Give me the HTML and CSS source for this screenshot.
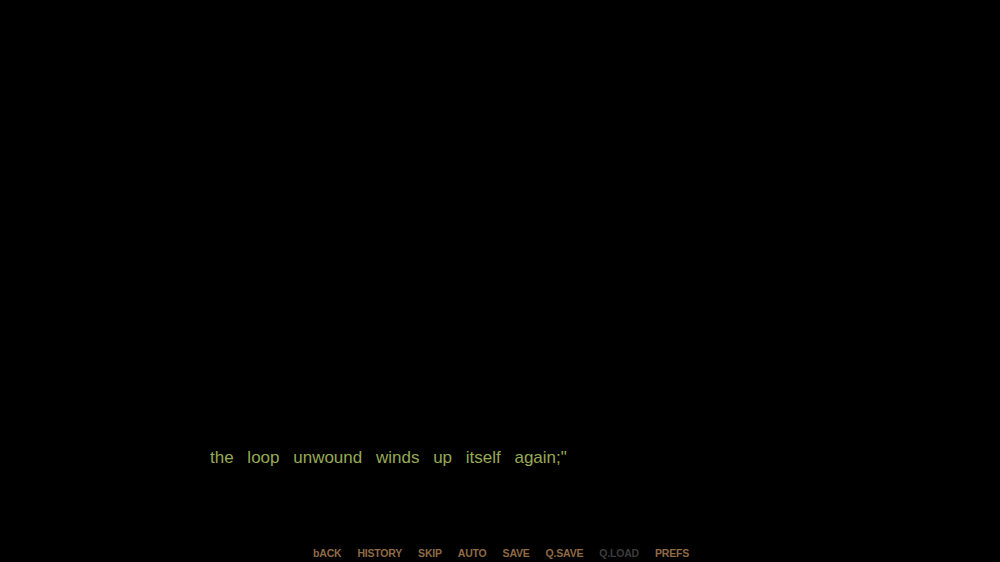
FILE: index.html
```html
<!DOCTYPE html>
<html>
<head>
<meta charset="utf-8">
<link rel="stylesheet" href="styles.css">
</head>
<body>
<div class="screen">
  <div class="stage"></div>
  <div class="dialogue">
    <p class="line">the loop unwound winds up itself again;"</p>
  </div>
  <nav class="quick-menu">
    <span class="qm-item qm-back">back</span>
    <span class="qm-item">History</span>
    <span class="qm-item">Skip</span>
    <span class="qm-item">Auto</span>
    <span class="qm-item">Save</span>
    <span class="qm-item">Q.Save</span>
    <span class="qm-item qm-disabled">Q.Load</span>
    <span class="qm-item">Prefs</span>
  </nav>
</div>
</body>
</html>
```
FILE: styles.css
```css
html, body {
  margin: 0;
  padding: 0;
  background: #000;
}
.screen {
  width: 1000px;
  height: 562px;
  background: #000;
  display: flex;
  flex-direction: column;
  overflow: hidden;
}
.stage {
  flex: 1;
}
.dialogue {
  padding: 0 0 0 210px;
  height: 97px;
}
.line {
  margin: 0;
  font-family: "Liberation Sans", sans-serif;
  font-size: 17px;
  line-height: 24px;
  word-spacing: 9px;
  color: #96a955;
}
.quick-menu {
  display: flex;
  justify-content: center;
  gap: 16px;
  height: 19px;
  align-items: center;
  padding: 1px 0 0 2px;
  box-sizing: border-box;
}
.qm-item {
  display: inline-block;
  font-family: "Liberation Sans", sans-serif;
  font-weight: bold;
  text-transform: uppercase;
  font-size: 10.5px;
  line-height: 13px;
  letter-spacing: -0.2px;
  color: #8f6b46;
}
.qm-back::first-letter {
  text-transform: none;
}
.qm-disabled {
  color: #3c3c3c;
}
```
